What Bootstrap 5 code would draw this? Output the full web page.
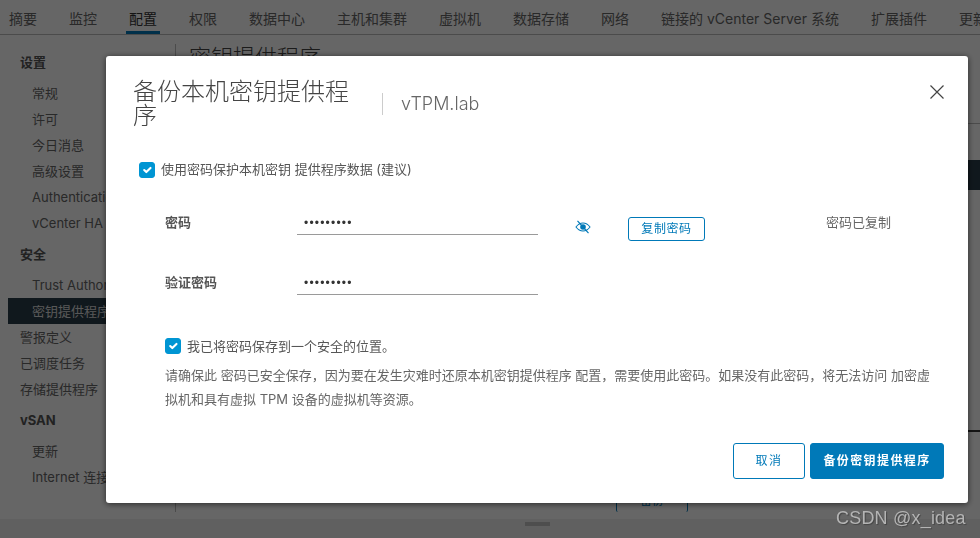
<!DOCTYPE html>
<html lang="zh-CN">

<head>
  <meta charset="UTF-8" />
  <title>备份本机密钥提供程序</title>
  <meta name="viewport" content="width=device-width, initial-scale=1.0">

  <link href="https://cdn.jsdelivr.net/npm/bootstrap@5.3.3/dist/css/bootstrap.min.css" rel="stylesheet">

  <style>
    html, body {
      height: 538px;
      overflow: hidden;
    }

    body {
      font-family: "Inter", "Noto Sans CJK SC", sans-serif;
      font-size: 13px;
      color: #565656;
      background: #fff;
    }

    /* page behind the dialog */
    .tab-strip {
      height: 35px;
      padding-left: 6px;
      gap: 26px;
      border-bottom: 1px solid #bbb;
      flex-wrap: nowrap;
      white-space: nowrap;
    }

    .tab-strip a {
      padding: 4px 3px 0;
      height: 34px;
      line-height: 29px;
      font-size: 14px;
      color: #666;
      text-decoration: none;
    }

    .tab-strip a.on {
      color: #333;
      border-bottom: 3px solid #0079b8;
    }

    .app-main {
      height: 484px;
    }

    .side-menu {
      width: 175px;
      padding: 14px 0 0 8px;
      flex: none;
    }

    .side-menu h6 {
      margin: 0;
      padding-left: 12px;
      height: 31px;
      line-height: 26px;
      font-size: 13px;
      font-weight: 700;
      color: #555;
    }

    .side-menu a {
      display: block;
      height: 26px;
      line-height: 26px;
      padding-left: 24px;
      color: #666;
      text-decoration: none;
      white-space: nowrap;
      overflow: hidden;
    }

    .side-menu a.top {
      padding-left: 12px;
    }

    .side-menu a.on {
      background: #2a3d49;
      color: #ddd;
    }

    .side-menu .gap-top {
      margin-top: 5px;
    }

    .main-pane {
      border-left: 1px solid #bbb;
      margin-top: 9px;
      height: 468px;
      padding-left: 13px;
    }

    .main-pane h2 {
      font-size: 22px;
      font-weight: 300;
      color: #444;
      line-height: 30px;
      margin: -2px 0 0;
    }

    .edge-line {
      height: 1px;
      background: #bbb;
      margin-top: 51px;
    }

    .edge-row {
      height: 30px;
      background: #2a3d49;
      margin-top: 36px;
    }

    .edge-line2 {
      height: 2px;
      background: #333;
      margin-top: 240px;
    }

    .page-foot {
      height: 19px;
      padding-left: 525px;
      background: #f0f0f0;
    }

    .foot-grip {
      width: 25px;
      height: 4px;
      margin-top: 3px;
      background: #c4c4c4;
    }

    .under-btn {
      position: absolute;
      left: 616px;
      top: 490px;
      width: 72px;
      height: 22px;
      border: 1px solid #0079b8;
      border-bottom: 0;
      border-radius: 2px;
      text-align: center;
      color: #0079b8;
      font-size: 12px;
      line-height: 20px;
    }

    /* dialog */
    .modal-backdrop.show {
      opacity: .6;
    }

    .dlg {
      max-width: none;
      width: 862px;
      margin: 56px 0 0 106px;
    }

    .dlg .modal-content {
      height: 447px;
      border: 0;
      border-radius: 3px;
      box-shadow: 0 1px 6px rgba(0, 0, 0, .6);
    }

    .dlg .modal-header {
      padding: 24px 24px 0 27px;
      border: 0;
      align-items: flex-start;
    }

    .dlg-title {
      width: 225px;
      margin: 0;
      font-size: 24px;
      font-weight: 300;
      line-height: 24px;
      color: #444;
    }

    .dlg-sub {
      margin: 13px 0 0 24px;
      padding-left: 18px;
      height: 22px;
      border-left: 1px solid #ccc;
      line-height: 22px;
      font-size: 18px;
      font-weight: 300;
      color: #666;
    }

    .dlg-close {
      margin: 5px 0 0 auto;
      padding: 0;
      width: 14px;
      height: 14px;
      line-height: 0;
      background: none;
      border: 0;
    }

    .dlg .modal-body {
      padding: 32px 24px 0 33px;
    }

    .chk-line {
      display: flex;
      align-items: center;
      gap: 6px;
      margin: 0;
      min-height: 16px;
      padding: 0;
    }

    .chk-line .form-check-input {
      width: 16px;
      height: 16px;
      margin: 0;
      float: none;
      border-radius: 3px;
    }

    .form-check-input:checked {
      background-color: #0095d3;
      border-color: #0095d3;
    }

    .pw-block {
      margin: 29px 0 0 26px;
    }

    .pw-row {
      display: flex;
      align-items: flex-start;
      height: 60px;
    }

    .pw-label {
      width: 132px;
      font-weight: 700;
      color: #565656;
      line-height: 26px;
    }

    .pw-input {
      width: 241px;
      height: 26px;
      padding: 3px 7px 0;
      border: 0;
      border-bottom: 1px solid #9a9a9a;
      border-radius: 0;
      background: none;
      font-family: "Liberation Sans", sans-serif;
      font-size: 12px;
      letter-spacing: 1.2px;
      color: #333;
      box-shadow: none;
    }

    .eye-btn {
      margin: 11px 0 0 37px;
      line-height: 0;
    }

    .copy-btn {
      margin: 8px 0 0 37px;
      width: 77px;
      height: 24px;
      padding: 0;
      font-size: 12px;
      letter-spacing: .6px;
      line-height: 22px;
      border-radius: 3px;
      color: #0079b8;
      border-color: #0079b8;
    }

    .pw-note {
      margin-left: 121px;
      line-height: 26px;
      font-size: 13px;
      color: #666;
    }

    .keep-block {
      margin: 8px 0 0 26px;
    }

    .keep-block p {
      margin: 7px 0 0;
      width: 775px;
      font-size: 13px;
      line-height: 24px;
      color: #666;
    }

    .dlg .modal-footer {
      padding: 0 24px 24px 0;
      border: 0;
      gap: 5px;
    }

    .dlg .modal-footer > * {
      margin: 0;
    }

    .dlg-btn {
      height: 36px;
      padding: 0;
      font-size: 12px;
      letter-spacing: 1.400px;
      border-radius: 3px;
    }

    .dlg-btn.cancel {
      width: 72px;
      color: #0079b8;
      border-color: #0079b8;
    }

    .dlg-btn.go {
      width: 134px;
      font-weight: 700;
      background: #0079b8;
      border-color: #0079b8;
    }

    .csdn-mark {
      position: fixed;
      left: 836px;
      top: 506px;
      z-index: 2000;
      font-family: "Liberation Sans", sans-serif;
      font-size: 18px;
      letter-spacing: .2px;
      line-height: 24px;
      color: #b4b4b4;
      text-shadow: 1px 1px 1px #444;
    }
  </style>
</head>

<body>
  <!-- page behind the dialog -->
  <nav class="nav tab-strip">
    <a href="#">摘要</a>
    <a href="#">监控</a>
    <a href="#" class="on">配置</a>
    <a href="#">权限</a>
    <a href="#">数据中心</a>
    <a href="#">主机和集群</a>
    <a href="#">虚拟机</a>
    <a href="#">数据存储</a>
    <a href="#">网络</a>
    <a href="#">链接的 vCenter Server 系统</a>
    <a href="#">扩展插件</a>
    <a href="#">更新</a>
  </nav>

  <div class="d-flex app-main">
    <div class="side-menu">
      <h6>设置</h6>
      <a href="#">常规</a>
      <a href="#">许可</a>
      <a href="#">今日消息</a>
      <a href="#">高级设置</a>
      <a href="#">Authentication</a>
      <a href="#">vCenter HA</a>
      <h6 class="gap-top">安全</h6>
      <a href="#">Trust Authority</a>
      <a href="#" class="on">密钥提供程序</a>
      <a href="#" class="top">警报定义</a>
      <a href="#" class="top">已调度任务</a>
      <a href="#" class="top">存储提供程序</a>
      <h6 class="gap-top">vSAN</h6>
      <a href="#">更新</a>
      <a href="#">Internet 连接</a>
    </div>
    <div class="main-pane flex-grow-1">
      <h2>密钥提供程序</h2>
      <div class="edge-line"></div>
      <div class="edge-row"></div>
      <div class="edge-line2"></div>
    </div>
  </div>
  <div class="under-btn">备份</div>
  <div class="page-foot d-flex">
    <div class="foot-grip"></div>
  </div>

  <div class="modal-backdrop show"></div>

  <!-- dialog -->
  <div class="modal d-block" tabindex="-1">
    <div class="modal-dialog dlg">
      <div class="modal-content">
        <div class="modal-header">
          <h3 class="dlg-title">备份本机密钥提供程序</h3>
          <div class="dlg-sub">vTPM.lab</div>
          <button type="button" class="dlg-close" aria-label="关闭">
            <svg width="14" height="14" viewBox="0 0 14 14">
              <path d="M.5 .5 13.500 13.500M13.500 .5 .5 13.500" stroke="#444" stroke-width="1.200" fill="none" />
            </svg>
          </button>
        </div>
        <div class="modal-body">
          <label class="chk-line">
            <input class="form-check-input" type="checkbox" checked>
            <span>使用密码保护本机密钥 提供程序数据 (建议)</span>
          </label>

          <div class="pw-block">
            <div class="pw-row">
              <div class="pw-label">密码</div>
              <input class="form-control pw-input" type="password" value="123456789">
              <div class="eye-btn">
                <svg width="16" height="14" viewBox="0 0 16 14">
                  <path d="M1 7C3 4.300 5.300 3 8 3s5 1.300 7 4c-2 2.700-4.300 4-7 4S3 9.700 1 7Z" fill="none" stroke="#0079b8" stroke-width="1.100" />
                  <circle cx="8" cy="7" r="2.800" fill="#0079b8" />
                  <path d="M2.500 .8 13.500 13.200" stroke="#0079b8" stroke-width="1.200" />
                </svg>
              </div>
              <button type="button" class="btn btn-outline-primary copy-btn">复制密码</button>
              <div class="pw-note">密码已复制</div>
            </div>
            <div class="pw-row">
              <div class="pw-label">验证密码</div>
              <input class="form-control pw-input" type="password" value="123456789">
            </div>
          </div>

          <div class="keep-block">
            <label class="chk-line">
              <input class="form-check-input" type="checkbox" checked>
              <span>我已将密码保存到一个安全的位置。</span>
            </label>
            <p>请确保此 密码已安全保存，因为要在发生灾难时还原本机密钥提供程序 配置，需要使用此密码。如果没有此密码，将无法访问 加密虚拟机和具有虚拟 TPM 设备的虚拟机等资源。</p>
          </div>
        </div>
        <div class="modal-footer">
          <button type="button" class="btn btn-outline-primary dlg-btn cancel">取消</button>
          <button type="button" class="btn btn-primary dlg-btn go">备份密钥提供程序</button>
        </div>
      </div>
    </div>
  </div>

  <div class="csdn-mark">CSDN @x_idea</div>

  <script src="https://cdn.jsdelivr.net/npm/bootstrap@5.3.3/dist/js/bootstrap.bundle.min.js"></script>
</body>

</html>
